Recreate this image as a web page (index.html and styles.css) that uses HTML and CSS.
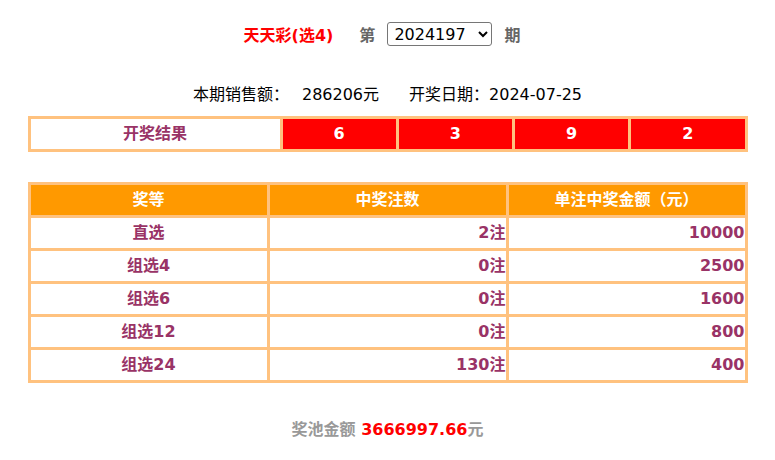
FILE: index.html
```html
<!DOCTYPE html>
<html lang="zh-CN">
<head>
<meta charset="utf-8">
<title>天天彩(选4)</title>
<link rel="stylesheet" href="styles.css">
</head>
<body>
<div class="page">
  <div class="title">
    <span class="game">天天彩(选4)</span>
    <span class="label">第</span>
    <select class="issue">
      <option>2024197</option>
    </select>
    <span class="label">期</span>
  </div>
  <div class="info">
    <span>本期销售额：</span><span class="sales">286206元</span><span class="date-label">开奖日期：</span><span>2024-07-25</span>
  </div>
  <table class="result">
    <colgroup><col class="c-first"><col><col><col><col></colgroup>
    <tr>
      <td class="result-title">开奖结果</td>
      <td class="ball">6</td>
      <td class="ball">3</td>
      <td class="ball">9</td>
      <td class="ball">2</td>
    </tr>
  </table>
  <table class="prize">
    <tr>
      <th>奖等</th>
      <th>中奖注数</th>
      <th>单注中奖金额（元）</th>
    </tr>
    <tr><td class="center">直选</td><td>2注</td><td>10000</td></tr>
    <tr><td class="center">组选4</td><td>0注</td><td>2500</td></tr>
    <tr><td class="center">组选6</td><td>0注</td><td>1600</td></tr>
    <tr><td class="center">组选12</td><td>0注</td><td>800</td></tr>
    <tr><td class="center">组选24</td><td>130注</td><td>400</td></tr>
  </table>
  <div class="pool">奖池金额 <span class="pool-num">3666997.66</span>元</div>
</div>
</body>
</html>
```

FILE: styles.css
```css
html, body {
  margin: 0;
  padding: 0;
  background: #ffffff;
}
body {
  font-family: "DejaVu Sans", "Noto Sans CJK SC", sans-serif;
  font-size: 16px;
  color: #000000;
}
.page {
  display: flex;
  flex-direction: column;
  align-items: center;
  padding-top: 22px;
}
.title {
  display: flex;
  align-items: center;
  height: 24px;
  font-weight: bold;
  padding-right: 11px;
}
.game {
  color: #ff0000;
  margin-right: 26px;
}
.label {
  color: #666666;
}
.issue {
  font-family: "DejaVu Sans", sans-serif;
  font-size: 16px;
  width: 105px;
  height: 24px;
  margin: 0 12px;
  padding: 0 2px;
  border: 1px solid #767676;
  border-radius: 3px;
  background: #ffffff;
  color: #000000;
}
.info {
  margin-top: 39px;
  height: 20px;
  line-height: 20px;
}
.sales {
  margin-left: 13px;
  margin-right: 30px;
}
.result, .prize {
  width: 720px;
  table-layout: fixed;
  border-collapse: separate;
  border-spacing: 3px;
  background: #ffc27f;
  font-weight: bold;
}
.result {
  margin-top: 11px;
}
.c-first {
  width: 249px;
}
.result td, .prize td, .prize th {
  height: 30px;
  padding: 0;
  line-height: 30px;
}
.result-title {
  background: #ffffff;
  color: #993366;
  text-align: center;
}
.ball {
  background: #ff0000;
  color: #ffffff;
  text-align: center;
}
.prize {
  margin-top: 30px;
}
.prize th {
  background: #ff9900;
  color: #ffffff;
  text-align: center;
  font-weight: bold;
}
.prize td {
  background: #ffffff;
  color: #993366;
  text-align: right;
}
.prize td.center {
  text-align: center;
}
.pool {
  margin-top: 37px;
  height: 20px;
  line-height: 20px;
  font-weight: bold;
  color: #999999;
}
.pool-num {
  color: #ff0000;
}
```
